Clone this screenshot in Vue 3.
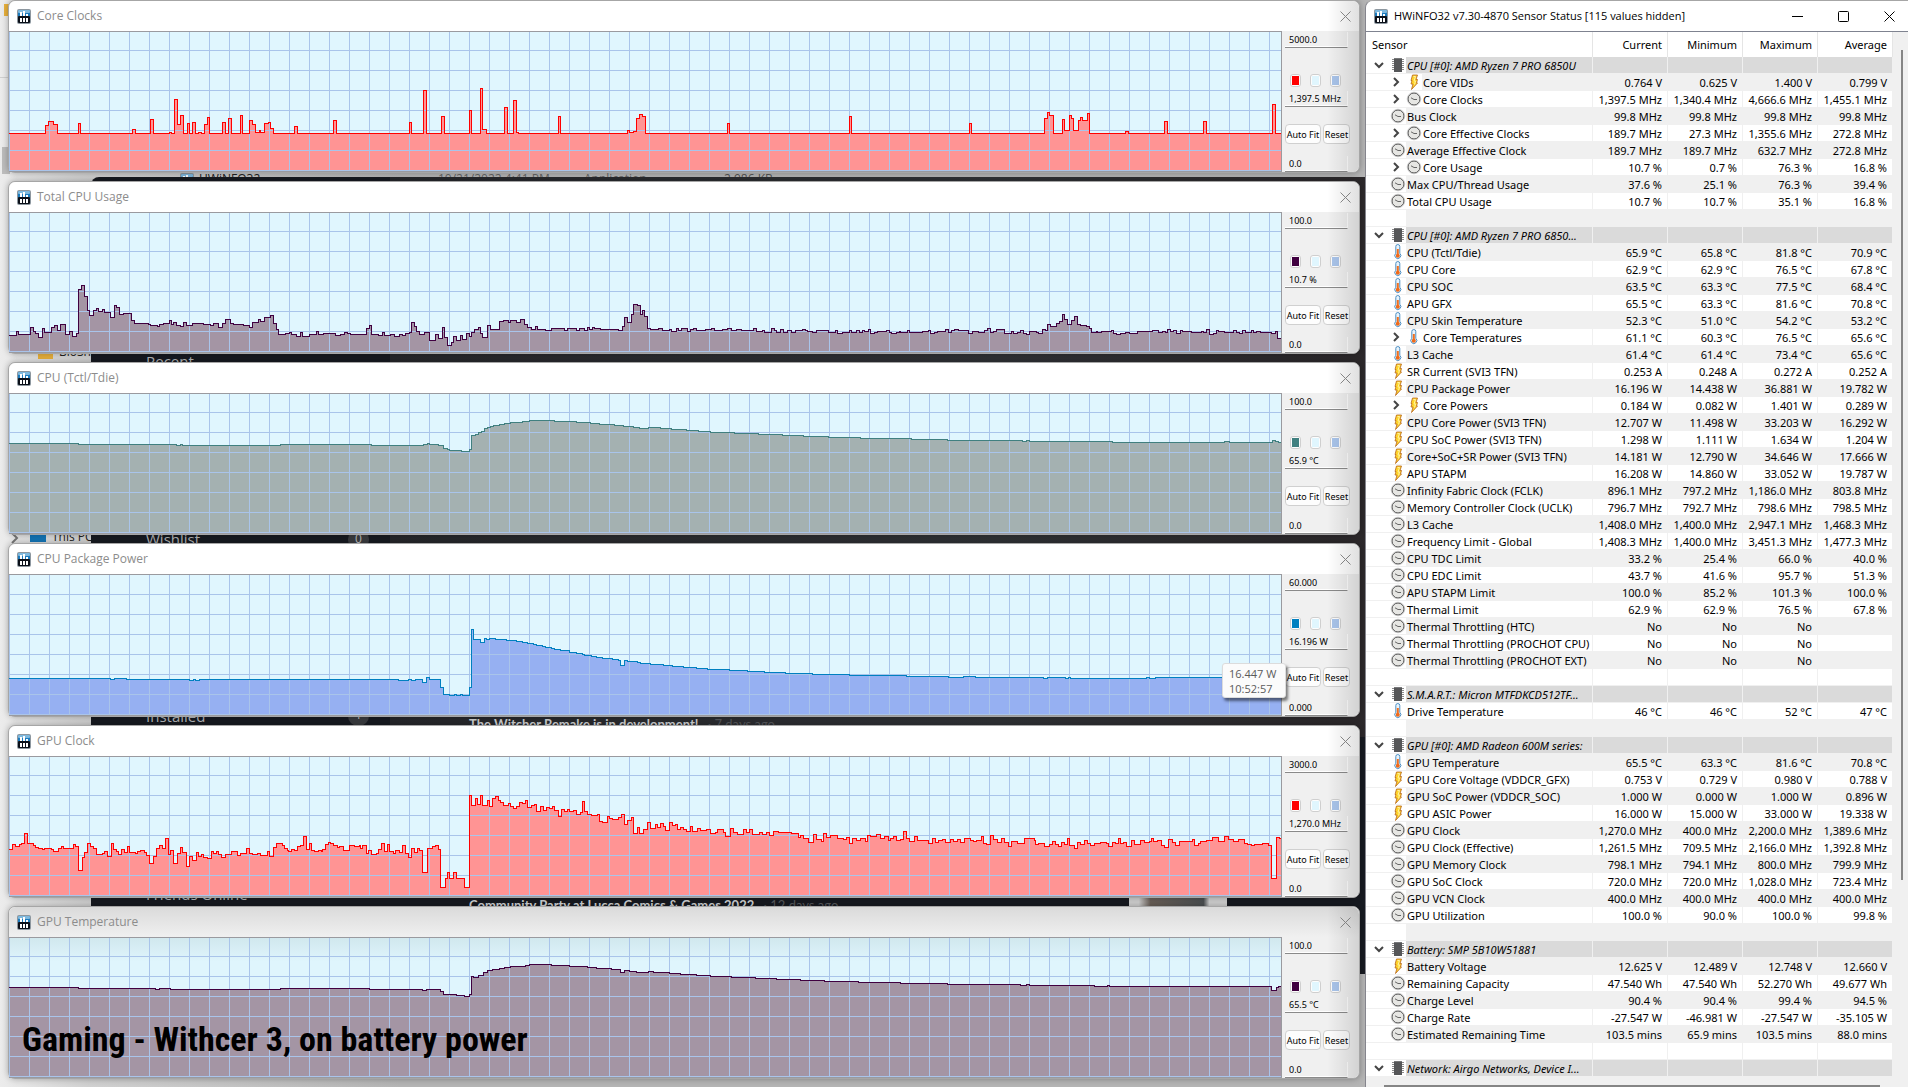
<script setup>
const readings = {
  coreClocks:
    '0 37 36 45 39 49 44 46 48 37 69 47 71 37 123 41 126 37 141 51 144 37 160 38 162 37 165 71 168 46 171 55 174 37 178 47 180 37 183 48 186 37 189 38 192 37 195 46 198 53 200 37 213 48 216 37 219 52 222 37 231 55 233 37 240 50 243 46 246 38 250 40 251 38 255 47 259 48 261 42 264 37 285 44 288 37 324 50 327 37 400 48 402 37 414 80 417 37 432 54 435 37 460 60 462 37 471 82 473 41 477 37 495 63 498 37 504 70 507 38 509 37 549 54 551 37 618 40 620 38 624 39 627 52 630 56 633 54 636 37 718 47 720 37 840 54 842 37 960 47 962 37 1035 52 1038 58 1040 55 1044 37 1053 51 1055 40 1060 55 1062 52 1064 40 1069 50 1071 53 1073 50 1078 57 1080 37 1116 39 1119 37 1155 49 1158 37 1194 49 1197 37 1263 66 1266 37',
  cpuUsage:
    '0 16 7 20 9 17 21 24 24 20 26 18 29 14 33 23 35 19 42 24 45 26 48 21 51 27 56 17 60 20 63 15 67 18 69 62 72 66 75 55 78 41 80 36 84 41 87 43 89 40 93 42 95 39 101 34 105 46 107 44 110 37 114 38 122 31 125 28 139 27 141 26 148 25 150 27 154 28 160 31 162 27 164 29 167 26 171 25 174 29 177 26 183 28 194 27 201 26 204 28 209 24 213 28 216 32 221 28 224 27 234 26 240 24 243 29 249 32 251 30 255 34 261 36 264 28 267 22 269 17 276 18 280 19 282 17 287 15 291 19 293 15 300 17 307 20 309 17 314 18 326 16 331 17 335 19 338 18 341 17 357 23 360 26 362 17 369 16 373 19 375 16 381 17 385 15 390 17 393 16 396 18 400 19 402 29 405 25 407 20 410 17 415 19 420 11 426 17 429 13 433 24 435 14 438 6 442 9 444 15 447 11 451 16 453 12 457 18 460 15 462 19 465 22 469 24 471 18 473 14 478 26 481 22 490 30 494 31 499 29 501 31 507 29 511 32 515 27 518 24 522 22 526 25 528 22 536 21 542 23 555 21 558 23 567 21 570 23 575 21 578 24 580 22 583 24 585 23 591 22 609 21 613 25 615 34 618 29 622 37 624 47 628 46 631 37 633 41 635 35 638 23 641 22 649 23 653 21 660 22 662 20 667 23 669 21 672 23 678 20 681 22 684 23 687 21 696 22 702 23 705 21 713 22 718 23 722 21 727 22 732 21 744 23 747 20 753 21 755 19 762 23 765 21 767 19 771 22 774 19 778 21 782 19 786 21 793 22 796 21 798 20 803 19 807 21 819 19 826 21 828 18 833 19 840 21 842 19 847 21 850 19 853 21 855 20 859 22 861 18 865 19 868 20 877 21 880 19 882 18 887 19 890 20 891 19 898 21 900 19 913 20 919 21 921 18 925 19 928 20 936 22 939 19 942 21 945 22 949 21 959 18 963 20 969 19 975 21 978 23 981 19 984 20 987 22 995 18 1002 20 1004 18 1008 19 1011 21 1014 18 1017 17 1020 20 1027 19 1029 18 1033 22 1036 21 1038 27 1041 25 1047 28 1050 30 1053 37 1055 32 1058 27 1062 31 1065 35 1068 27 1071 26 1077 25 1080 23 1082 19 1087 20 1088 19 1092 20 1102 21 1104 18 1107 17 1111 18 1116 19 1120 18 1128 20 1143 21 1149 19 1153 20 1156 19 1158 22 1161 20 1164 21 1167 18 1171 21 1173 20 1182 19 1192 20 1194 19 1197 22 1200 17 1204 18 1207 21 1209 20 1215 19 1224 21 1227 19 1230 18 1233 21 1236 19 1242 21 1244 19 1247 20 1251 19 1262 18 1266 20 1268 13',
  cpuTemp:
    '0 89 69 88 167 87 171 88 173 87 271 88 362 87 414 88 418 89 420 88 429 87 434 84 438 83 440 82 452 81 460 83 462 97 466 98 469 100 472 101 475 104 478 105 481 106 484 107 490 108 495 109 501 110 513 111 520 112 545 111 567 110 581 109 590 108 605 107 614 106 624 105 630 104 639 105 651 104 662 103 677 102 689 101 701 100 725 99 749 98 773 97 794 96 819 95 851 94 902 93 938 92 1013 91 1017 92 1020 91 1103 90 1215 91 1220 90 1263 92 1266 91 1269 90',
  cpuPower:
    '0 36 101 35 105 36 117 35 180 34 184 35 186 34 190 35 389 34 399 35 402 34 406 35 413 32 417 37 420 35 431 27 434 20 440 19 445 20 447 19 451 20 453 19 460 27 462 85 464 75 471 72 475 76 477 75 480 76 486 75 497 74 507 73 513 72 518 71 524 70 527 69 533 68 536 67 542 66 545 65 551 64 560 62 567 61 573 60 575 59 582 58 587 57 593 56 603 55 609 54 611 49 615 54 618 53 628 52 631 51 641 50 654 49 663 48 674 47 687 46 698 45 720 44 738 43 755 42 776 41 803 40 840 39 897 38 939 37 954 38 966 37 1034 36 1038 37 1056 36 1059 37 1061 36 1137 37 1140 36 1146 37',
  gpuClock:
    '0 46 3 51 6 49 10 51 12 52 15 62 18 52 24 50 26 48 29 47 33 46 35 47 42 46 44 44 49 47 52 49 54 47 64 51 66 49 69 25 73 38 75 43 78 52 81 49 84 47 87 41 93 42 95 44 98 39 102 52 104 46 107 44 109 41 112 46 115 43 118 49 120 43 126 42 128 44 131 45 135 43 137 40 140 32 144 39 147 47 150 50 153 47 156 57 159 41 161 45 164 32 168 42 171 48 173 43 177 29 180 39 183 35 187 43 189 39 192 41 194 38 198 37 202 44 204 42 207 44 209 41 212 38 216 41 222 44 228 40 231 42 237 47 240 42 243 41 248 42 251 40 258 44 260 39 264 48 267 52 273 50 275 47 278 45 279 44 282 46 285 45 288 49 291 50 294 59 297 46 300 52 302 45 305 44 309 45 312 44 313 46 316 51 319 53 321 52 324 50 328 48 330 49 334 45 340 50 345 49 350 50 351 47 353 50 357 42 359 45 362 41 367 42 369 46 372 52 375 44 378 51 380 44 384 42 386 45 390 43 393 50 396 42 399 38 402 47 405 43 408 47 410 45 413 23 418 47 423 49 426 50 429 46 431 8 436 17 438 23 440 17 444 23 447 17 455 8 460 100 462 90 466 97 468 91 471 100 473 90 478 95 480 89 483 97 486 99 489 95 491 93 494 90 499 92 501 89 504 87 507 89 510 93 513 92 516 95 518 88 522 90 525 91 527 84 531 89 534 85 537 88 540 87 543 89 545 85 549 79 552 86 555 84 558 86 560 84 564 85 567 81 571 83 573 94 575 84 578 81 582 80 588 81 590 74 593 73 598 79 600 77 603 76 609 78 612 81 615 71 618 75 622 78 624 62 628 68 630 62 634 66 638 73 641 67 646 71 648 68 651 72 654 69 656 65 660 73 663 70 666 71 668 66 671 68 674 66 677 64 681 69 683 64 688 67 691 65 697 66 701 62 706 63 708 66 714 63 716 59 721 67 724 63 728 61 734 66 737 63 740 66 743 61 750 63 753 61 757 63 760 60 764 64 769 63 782 62 789 58 791 60 794 57 799 53 804 61 807 56 812 54 814 62 817 58 821 60 828 57 834 56 837 58 840 52 843 57 847 55 851 57 856 54 858 60 861 59 867 61 871 57 875 59 879 55 881 57 884 59 887 55 891 56 894 64 897 57 900 54 905 59 908 55 919 52 923 57 926 53 929 55 933 56 936 53 941 56 944 54 948 56 951 53 955 57 961 55 964 54 967 55 972 59 974 52 977 51 981 60 984 56 988 53 992 57 995 53 999 49 1002 54 1008 52 1015 57 1025 55 1026 51 1029 52 1035 49 1040 51 1043 54 1046 51 1049 49 1052 53 1055 51 1058 57 1060 50 1065 47 1068 53 1071 51 1075 55 1078 52 1081 50 1085 52 1091 53 1097 52 1099 49 1103 53 1106 52 1109 57 1111 52 1114 53 1117 49 1122 55 1125 51 1131 55 1135 53 1140 54 1142 57 1144 54 1148 55 1152 50 1155 48 1159 56 1163 53 1166 50 1170 54 1183 56 1185 50 1189 52 1191 54 1197 55 1203 58 1209 54 1215 59 1219 56 1224 54 1229 56 1235 52 1238 51 1242 50 1245 51 1253 52 1259 50 1262 17 1267 58 1270 57',
  gpuTemp:
    '0 89 69 88 146 87 150 88 161 87 271 88 360 87 413 86 417 87 431 85 434 82 447 81 455 80 460 82 462 100 464 99 469 101 474 104 478 106 483 107 490 108 495 109 501 110 516 111 520 112 542 111 560 110 578 109 587 108 602 107 611 104 615 106 620 105 627 104 639 105 644 104 660 103 671 102 687 101 701 100 722 99 746 98 767 97 791 96 815 95 849 94 891 93 938 92 1011 91 1017 92 1020 91 1085 90 1098 91 1100 90 1262 86 1267 89 1269 90',
}

const SPAN = 1272

function stepPath(text, height) {
  const n = text.split(' ').map(Number)
  const base = height - 0.5
  let d = `M-2 ${base - n[1]}`
  for (let i = 2; i < n.length; i += 2) d += `H${n[i] + 0.5}V${base - n[i + 1]}`
  return d + `H${SPAN + 2}`
}

function graph(title, data, max, now, min, line, fill, height = 139) {
  const d = stepPath(readings[data], height)
  const rows = []
  for (let y = height - 0.5; y > 0; y -= 20) rows.push(y)
  const cols = []
  for (let x = 0.5; x < SPAN; x += 20) cols.push(x)
  return {
    title, max, now, min, line, fill, height, d,
    area: `${d}V${height + 2}H-2Z`,
    grid: rows.map((y) => `M0 ${y}H${SPAN}`).join('') + cols.map((x) => `M${x} 0V${height}`).join(''),
  }
}

const graphs = [
  graph('Core Clocks', 'coreClocks', '5000.0', '1,397.5 MHz', '0.0', '#ff0000', '#ff9494'),
  graph('Total CPU Usage', 'cpuUsage', '100.0', '10.7 %', '0.0', '#400040', '#a495a4'),
  graph('CPU (Tctl/Tdie)', 'cpuTemp', '100.0', '65.9 °C', '0.0', '#408080', '#a4b1b1'),
  graph('CPU Package Power', 'cpuPower', '60.000', '16.196 W', '0.000', '#0080c0', '#96b0f2', 140),
  graph('GPU Clock', 'gpuClock', '3000.0', '1,270.0 MHz', '0.0', '#ff0000', '#ff9494'),
  graph('GPU Temperature', 'gpuTemp', '100.0', '65.5 °C', '0.0', '#400040', '#a495a4'),
]

const table = `
#|CPU [#0]: AMD Ryzen 7 PRO 6850U
>bolt|Core VIDs|0.764 V|0.625 V|1.400 V|0.799 V
>clock|Core Clocks|1,397.5 MHz|1,340.4 MHz|4,666.6 MHz|1,455.1 MHz
clock|Bus Clock|99.8 MHz|99.8 MHz|99.8 MHz|99.8 MHz
>clock|Core Effective Clocks|189.7 MHz|27.3 MHz|1,355.6 MHz|272.8 MHz
clock|Average Effective Clock|189.7 MHz|189.7 MHz|632.7 MHz|272.8 MHz
>clock|Core Usage|10.7 %|0.7 %|76.3 %|16.8 %
clock|Max CPU/Thread Usage|37.6 %|25.1 %|76.3 %|39.4 %
clock|Total CPU Usage|10.7 %|10.7 %|35.1 %|16.8 %
-
#|CPU [#0]: AMD Ryzen 7 PRO 6850...
temp|CPU (Tctl/Tdie)|65.9 °C|65.8 °C|81.8 °C|70.9 °C
temp|CPU Core|62.9 °C|62.9 °C|76.5 °C|67.8 °C
temp|CPU SOC|63.5 °C|63.3 °C|77.5 °C|68.4 °C
temp|APU GFX|65.5 °C|63.3 °C|81.6 °C|70.8 °C
temp|CPU Skin Temperature|52.3 °C|51.0 °C|54.2 °C|53.2 °C
>temp|Core Temperatures|61.1 °C|60.3 °C|76.5 °C|65.6 °C
temp|L3 Cache|61.4 °C|61.4 °C|73.4 °C|65.6 °C
bolt|SR Current (SVI3 TFN)|0.253 A|0.248 A|0.272 A|0.252 A
bolt|CPU Package Power|16.196 W|14.438 W|36.881 W|19.782 W
>bolt|Core Powers|0.184 W|0.082 W|1.401 W|0.289 W
bolt|CPU Core Power (SVI3 TFN)|12.707 W|11.498 W|33.203 W|16.292 W
bolt|CPU SoC Power (SVI3 TFN)|1.298 W|1.111 W|1.634 W|1.204 W
bolt|Core+SoC+SR Power (SVI3 TFN)|14.181 W|12.790 W|34.646 W|17.666 W
bolt|APU STAPM|16.208 W|14.860 W|33.052 W|19.787 W
clock|Infinity Fabric Clock (FCLK)|896.1 MHz|797.2 MHz|1,186.0 MHz|803.8 MHz
clock|Memory Controller Clock (UCLK)|796.7 MHz|792.7 MHz|798.6 MHz|798.5 MHz
clock|L3 Cache|1,408.0 MHz|1,400.0 MHz|2,947.1 MHz|1,468.3 MHz
clock|Frequency Limit - Global|1,408.3 MHz|1,400.0 MHz|3,451.3 MHz|1,477.3 MHz
clock|CPU TDC Limit|33.2 %|25.4 %|66.0 %|40.0 %
clock|CPU EDC Limit|43.7 %|41.6 %|95.7 %|51.3 %
clock|APU STAPM Limit|100.0 %|85.2 %|101.3 %|100.0 %
clock|Thermal Limit|62.9 %|62.9 %|76.5 %|67.8 %
clock|Thermal Throttling (HTC)|No|No|No|
clock|Thermal Throttling (PROCHOT CPU)|No|No|No|
clock|Thermal Throttling (PROCHOT EXT)|No|No|No|
-
#|S.M.A.R.T.: Micron MTFDKCD512TF...
temp|Drive Temperature|46 °C|46 °C|52 °C|47 °C
-
#|GPU [#0]: AMD Radeon 600M series:
temp|GPU Temperature|65.5 °C|63.3 °C|81.6 °C|70.8 °C
bolt|GPU Core Voltage (VDDCR_GFX)|0.753 V|0.729 V|0.980 V|0.788 V
bolt|GPU SoC Power (VDDCR_SOC)|1.000 W|0.000 W|1.000 W|0.896 W
bolt|GPU ASIC Power|16.000 W|15.000 W|33.000 W|19.338 W
clock|GPU Clock|1,270.0 MHz|400.0 MHz|2,200.0 MHz|1,389.6 MHz
clock|GPU Clock (Effective)|1,261.5 MHz|709.5 MHz|2,166.0 MHz|1,392.8 MHz
clock|GPU Memory Clock|798.1 MHz|794.1 MHz|800.0 MHz|799.9 MHz
clock|GPU SoC Clock|720.0 MHz|720.0 MHz|1,028.0 MHz|723.4 MHz
clock|GPU VCN Clock|400.0 MHz|400.0 MHz|400.0 MHz|400.0 MHz
clock|GPU Utilization|100.0 %|90.0 %|100.0 %|99.8 %
-
#|Battery: SMP 5B10W51881
bolt|Battery Voltage|12.625 V|12.489 V|12.748 V|12.660 V
clock|Remaining Capacity|47.540 Wh|47.540 Wh|52.270 Wh|49.677 Wh
clock|Charge Level|90.4 %|90.4 %|99.4 %|94.5 %
clock|Charge Rate|-27.547 W|-46.981 W|-27.547 W|-35.105 W
clock|Estimated Remaining Time|103.5 mins|65.9 mins|103.5 mins|88.0 mins
-
#|Network: Airgo Networks, Device I...`

const rows = table.trim().split('\n').map((text) => {
  const [kind, name = '', ...values] = text.split('|')
  const nested = kind[0] === '>'
  return {
    name,
    nested,
    group: kind === '#',
    blank: kind === '-',
    icon: kind === '#' ? 'chip' : nested ? kind.slice(1) : kind,
    values: [0, 1, 2, 3].map((i) => values[i] || ''),
  }
})
</script>

<template>
  <div class="screen">
    <svg class="defs" aria-hidden="true">
      <symbol id="icon-hw" viewBox="0 0 14 15">
        <rect x="0" y="0" width="14" height="15" rx="2" fill="#8d979f" />
        <rect x="1" y="1" width="12" height="7" rx="1" fill="#1d7bbd" />
        <rect x="1" y="1" width="12" height="3" rx="1" fill="#7fb9de" />
        <rect x="1" y="7" width="12" height="7" rx="1" fill="#0a0f18" />
        <path d="M4 3V7M7 2V7M10 5V7" stroke="#fff" stroke-width="2" />
        <path d="M4 9V13M7 9V13M10 9V13" stroke="#fff" stroke-width="2" />
      </symbol>
      <symbol id="icon-chip" viewBox="0 0 16 16">
        <path d="M2 2.5H14M2 4.5H14M2 6.5H14M2 8.5H14M2 10.5H14M2 12.5H14" stroke="#8c8c8c" />
        <rect x="4" y="1" width="8" height="14" fill="#555658" />
        <path d="M4 1.5H12" stroke="#77787a" />
      </symbol>
      <symbol id="icon-clock" viewBox="0 0 16 16">
        <circle cx="8" cy="8" r="6" fill="#e6e6e3" stroke="#4e4e4e" stroke-width="1" />
        <circle cx="8" cy="8" r="6.8" fill="none" stroke="#b5b5b5" stroke-width=".6" />
        <path d="M5 6.8L8 8.5H11" fill="none" stroke="#666" />
      </symbol>
      <symbol id="icon-bolt" viewBox="0 0 16 16">
        <path d="M6.5 1H11.5L10 5.5H11.5L10.5 9H11.5L5.5 15.5L7 10H5L6 6.5H5Z" fill="#ffd42a" stroke="#b5651d" stroke-width=".8" />
        <path d="M7.5 2.5H9.5L8 7H9.5L8.5 10.5" fill="none" stroke="#fff3a0" />
      </symbol>
      <symbol id="icon-temp" viewBox="0 0 16 16">
        <path d="M5.8 2.5A2 2 0 0 1 9.8 2.5V9.3A3 3 0 1 1 5.8 9.3Z" fill="#eaf4fb" stroke="#4d8fc4" />
        <path d="M7.8 5V12" stroke="#f07020" stroke-width="2" />
        <circle cx="7.8" cy="11.8" r="2" fill="#ef6a1a" />
      </symbol>
    </svg>

    <div class="backdrop" aria-hidden="true">
      <span class="bit folder top"></span>
      <span class="bit edge one"></span>
      <span class="bit edge two"></span>
      <span class="bit folder low"></span>
      <span class="bit file e">BloShi</span>
      <svg class="bit twist" viewBox="0 0 8 12"><path d="M1 1L6 6L1 11" /></svg>
      <span class="bit monitor"></span>
      <span class="bit file f">This PC</span>
      <svg class="bit exe"><use href="#icon-hw" /></svg>
      <span class="bit file a">HWiNFO32</span>
      <span class="bit file b">10/21/2022 4:41 PM</span>
      <span class="bit file c">Application</span>
      <span class="bit file d">2,986 KB</span>
      <div class="store"><div class="hero"></div></div>
      <span class="bit nav recent">Recent</span>
      <span class="bit nav wish">Wishlist</span>
      <span class="bit nav inst">Installed</span>
      <span class="bit nav friends">Friends Online</span>
      <span class="bit count zero">0</span>
      <span class="bit count one">1</span>
      <span class="bit news first"><b>The Witcher Remake is in development!</b> · 7 days ago</span>
      <span class="bit news second"><b>Community Party at Lucca Comics &amp; Games 2022</b> · 12 days ago</span>
      <span class="bit thumb"></span>
    </div>

    <main class="graphs">
      <section v-for="(g, i) in graphs" :key="g.title" class="win graph" :class="{ shaded: i === 5 }">
        <header class="bar">
          <svg class="app"><use href="#icon-hw" /></svg>
          <h2>{{ g.title }}</h2>
          <button class="close" :aria-label="`Close ${g.title}`">
            <svg viewBox="0 0 11 11"><path d="M.5 .5L10.5 10.5M10.5 .5L.5 10.5" /></svg>
          </button>
        </header>
        <div class="body">
          <div class="plot">
            <svg :viewBox="`0 0 1272 ${g.height}`" :height="g.height" preserveAspectRatio="none" role="img" :aria-label="g.title">
              <path :d="g.area" :fill="g.fill" />
              <path :d="g.grid" class="grid" />
              <path :d="g.d" class="trace" :stroke="g.line" />
            </svg>
            <p v-if="i === 5" class="caption">Gaming - Withcer 3, on battery power</p>
            <div v-if="i === 3" class="tip" role="tooltip">16.447 W<br />10:52:57</div>
          </div>
          <div class="side">
            <input :value="g.max" :aria-label="`${g.title} maximum`" />
            <div class="reading">
              <div class="swatches">
                <button aria-label="Line colour"><i class="line" :style="{ background: g.line }"></i></button>
                <button aria-label="Background colour"><i class="paper"></i></button>
                <button aria-label="Grid colour"><i class="mesh"></i></button>
              </div>
              <input :value="g.now" readonly :aria-label="`${g.title} current value`" />
            </div>
            <div class="buttons">
              <button>Auto Fit</button>
              <button>Reset</button>
            </div>
            <input class="floor" :value="g.min" :aria-label="`${g.title} minimum`" />
          </div>
        </div>
      </section>
    </main>

    <aside class="win sensors">
      <header class="bar">
        <svg class="app"><use href="#icon-hw" /></svg>
        <h1>HWiNFO32 v7.30-4870 Sensor Status [115 values hidden]</h1>
        <button class="ctl" aria-label="Minimize"><svg viewBox="0 0 11 11"><path d="M0 5.5H11" /></svg></button>
        <button class="ctl" aria-label="Maximize"><svg viewBox="0 0 11 11"><rect x=".5" y=".5" width="10" height="10" rx="1" /></svg></button>
        <button class="ctl" aria-label="Close"><svg viewBox="0 0 11 11"><path d="M.5 .5L10.5 10.5M10.5 .5L.5 10.5" /></svg></button>
      </header>
      <div class="list">
        <table>
          <colgroup><col /><col class="num" /><col class="num" /><col class="num" /><col class="num" /></colgroup>
          <thead>
            <tr><th class="first">Sensor</th><th>Current</th><th>Minimum</th><th>Maximum</th><th>Average</th></tr>
          </thead>
          <tbody>
            <tr v-for="(r, i) in rows" :key="i" :class="{ odd: i % 2, group: r.group, blank: r.blank, nested: r.nested }">
              <td class="name">
                <div>
                  <span class="lead">
                    <svg v-if="r.group" class="chev" viewBox="0 0 10 10"><path d="M1 3L5 7L9 3" /></svg>
                    <svg v-if="r.nested" class="chev" viewBox="0 0 10 10"><path d="M3 1L7 5L3 9" /></svg>
                    <svg v-if="!r.blank" class="icon"><use :href="`#icon-${r.icon}`" /></svg>
                  </span>
                  <span class="label">{{ r.name }}</span>
                </div>
              </td>
              <td v-for="(v, c) in r.values" :key="c">{{ v }}</td>
            </tr>
          </tbody>
        </table>
        <div class="vscroll"><i></i></div>
      </div>
      <div class="hscroll"><i></i></div>
    </aside>
  </div>
</template>

<style>
html, body, #app { height: 100%; }
body { margin: 0; overflow: hidden; }
</style>

<style scoped>
* { box-sizing: border-box; }
.screen {
  position: relative;
  display: grid;
  grid-template-columns: minmax(0, 1fr) 543px;
  min-height: 100%;
  background: #d4d4d4;
  font-family: "Open Sans", "Noto Sans", sans-serif;
  font-size: 12px;
}
.defs { position: absolute; width: 0; height: 0; }
button, input { font: inherit; margin: 0; padding: 0; border: 0; background: none; color: inherit; }
h1, h2, p { margin: 0; font-weight: 400; }

/* windows behind the graphs */
.backdrop { position: absolute; inset: 0; overflow: hidden; background: linear-gradient(90deg, #ececec, #d0d0d0 88px, #b4b4b4 400px, #b4b4b4); }
.store { position: absolute; left: 91px; right: 0; top: 177px; height: 797px; border-radius: 8px 0 0 0; background: #171a21; }
.hero { margin-left: 299px; height: 560px; background: linear-gradient(90deg, #26272b, #303236 40%, #2b2628 70%, #4a3c34); }
.bit { position: absolute; white-space: nowrap; }
.file { color: #222; font-size: 12px; line-height: 16px; }
.file.a { left: 199px; top: 171px; }
.file.b { left: 438px; top: 171px; color: #666; }
.file.c { left: 584px; top: 171px; color: #666; }
.file.d { left: 724px; top: 171px; color: #555; }
.file.e { left: 59px; top: 344px; }
.file.f { left: 52px; top: 529px; }
.exe { left: 180px; top: 173px; width: 14px; height: 15px; }
.folder { background: #e9b13c; width: 15px; height: 12px; }
.folder.top { left: 4px; top: 4px; }
.folder.low { left: 38px; top: 347px; }
.monitor { left: 30px; top: 531px; width: 16px; height: 11px; background: #1476b8; }
.twist { left: 11px; top: 532px; width: 8px; height: 12px; fill: none; stroke: #777; stroke-width: 2; }
.edge { left: 0; width: 8px; }
.edge.one { top: 77px; height: 1px; background: #cfcfcf; }
.edge.two { top: 147px; left: 2px; height: 27px; background: #bcbcbc; }
.nav { left: 146px; font-size: 15px; line-height: 20px; color: #b4b6b8; }
.recent { top: 351px; }
.wish { top: 529px; }
.inst { top: 706px; }
.friends { top: 884px; }
.count { left: 348px; width: 21px; height: 21px; border-radius: 10px; background: #3a3c40; color: #c0c0c0; text-align: center; line-height: 20px; }
.count.zero { top: 529px; }
.count.one { top: 705px; }
.news { left: 469px; font-family: Lato, sans-serif; font-size: 13px; line-height: 16px; color: #56585c; }
.news b { color: #d0d2d4; margin-right: 6px; }
.news.first { top: 716px; }
.news.second { top: 897px; }
.thumb { left: 1129px; top: 894px; width: 98px; height: 16px; background: linear-gradient(90deg, #d0d0d0 10%, #6a6058 22%, #4c5052 76%, #d0d0d0 82%); }

/* window frame */
.win { position: relative; border: 1px solid #a6a6a6; background: #f0f0f0; overflow: hidden; }
.bar { display: flex; align-items: center; height: 30px; padding-left: 8px; background: #fff; }
.app { width: 14px; height: 15px; margin-right: 6px; }
.bar svg { flex: none; }
h1, h2 { flex: 1; line-height: 16px; white-space: nowrap; padding-bottom: 1px; }

/* graphs */
.graphs { position: relative; display: flex; flex-direction: column; gap: 8px; padding: 0 5px 8px 8px; }
.graph { border-radius: 7px; box-shadow: 0 0 6px rgba(0, 0, 0, .3); overflow: visible; }
.graph::after { content: ""; position: absolute; top: 0; right: 0; bottom: 0; width: 32px; border-radius: 0 7px 7px 0; background: linear-gradient(90deg, transparent, rgba(0, 0, 0, .12)); pointer-events: none; }
.graph .bar { border-radius: 7px 7px 0 0; }
h2 { color: #8c8c8c; font-size: 12px; }
.close { width: 27px; height: 30px; }
.close svg { width: 11px; height: 11px; stroke: #8c8c8c; fill: none; display: block; margin: 0 auto; }
.body { display: flex; }
.plot { position: relative; flex: 1; min-width: 0; border: 1px solid #9a9a9f; border-left: 0; background: #e0f6fe; }
.plot > svg { display: block; width: 100%; }
.plot path { vector-effect: non-scaling-stroke; shape-rendering: crispEdges; }
.grid { fill: none; stroke: #a9c4ea; }
.trace { fill: none; }
.shaded .bar { background: linear-gradient(#dadada, #f0f0f0); }
.shaded .plot { background: linear-gradient(#d1e8ee, #dff5fd 24px); }
.caption { position: absolute; left: 13px; bottom: 14px; font-family: "Roboto Condensed", "Liberation Sans Narrow", "Open Sans", sans-serif; font-weight: 700; font-size: 34px; line-height: 48px; color: #000; white-space: nowrap; }
.tip { position: absolute; z-index: 2; right: -5px; bottom: 17px; width: 64px; height: 35px; padding: 2px 0 0 6px; border: 1px solid #dcdcdc; border-radius: 3px; background: #fbfbfb; color: #5a5a5a; font-size: 11px; line-height: 15px; box-shadow: 2px 3px 3px rgba(0, 0, 0, .5); }
.side { flex: none; width: 77px; padding: 1px 0 0 3px; display: flex; flex-direction: column; font-family: "Noto Sans", sans-serif; font-size: 9px; color: #000; }
.side input { display: block; width: 63px; height: 16px; padding: 0 4px; border-bottom: 1px solid #8a8a8a; border-right: 1px solid #fff; box-shadow: inset 0 -1px #fff; }
.reading { margin-top: 26px; }
.swatches { display: flex; gap: 9px; padding-left: 5px; margin-bottom: 4px; }
.swatches button { width: 11px; height: 13px; padding: 1px; border: 1px solid #cfcfcf; border-radius: 3px; background: #fdfdfd; display: flex; }
.swatches i { flex: 1; }
.paper { background: #e0f6fe; }
.mesh { background: #a9c4ea; }
.buttons { display: flex; gap: 2px; margin-top: 17px; }
.buttons button { height: 20px; width: 36px; border: 1px solid #d0d0d0; border-radius: 4px; background: #fdfdfd; white-space: nowrap; }
.buttons button + button { width: 27px; }
.side .floor { margin-top: auto; }

/* sensor list */
.sensors { border: 0; border-left: 1px solid #85858d; border-top: 1px solid #a6a6a6; border-radius: 8px 0 0 0; }
.sensors .bar { height: 31px; border-bottom: 1px solid #7f8390; }
h1 { color: #000; font-size: 11px; }
.ctl { width: 46px; height: 30px; }
.ctl:last-child { margin-right: -4px; }
.ctl svg { display: block; width: 11px; height: 11px; margin: 0 auto; fill: none; stroke: #000; }
.list { display: flex; background: #fff; }
table { flex: 1; min-width: 0; table-layout: fixed; border-collapse: separate; border-spacing: 0; font-family: "Noto Sans", sans-serif; font-size: 11px; line-height: 14px; color: #000; }
.num { width: 75px; }
th { height: 25px; padding: 0 5px 0 0; font-weight: 400; text-align: right; border-right: 1px solid #e5e5e5; }
th.first { text-align: left; padding-left: 6px; }
td { height: 17px; padding: 2px 5px 0 0; text-align: right; white-space: nowrap; border-right: 1px solid #f0f0f0; border-bottom: 1px solid #f0f0f0; }
td.name { padding: 0; }
.name div { display: flex; height: 16px; text-align: left; }
.lead { flex: none; width: 40px; display: flex; align-items: center; justify-content: flex-end; background: #fff; }
.nested .lead { width: 56px; }
.icon { width: 16px; height: 16px; }
.chev { width: 10px; height: 10px; margin-right: 6px; fill: none; stroke: #444; stroke-width: 2; }
.nested .chev { margin-right: 5px; }
.label { flex: 1; min-width: 0; padding: 2px 0 0 1px; }
.odd td:not(.name), .odd .label { background: #f0f0f0; }
.group td:not(.name), .group .label { background: #dadada; }
.group .label { font-style: italic; }
.vscroll { width: 15px; background: #f0f0f0; display: flex; justify-content: center; }
.vscroll i { width: 2px; height: 830px; margin: 18px 0 0 2px; background: #858585; }
.hscroll { height: 10px; padding: 8px 28px 0 18px; background: #f0f0f0; }
.hscroll i { display: block; height: 2px; background: #858585; }
</style>
